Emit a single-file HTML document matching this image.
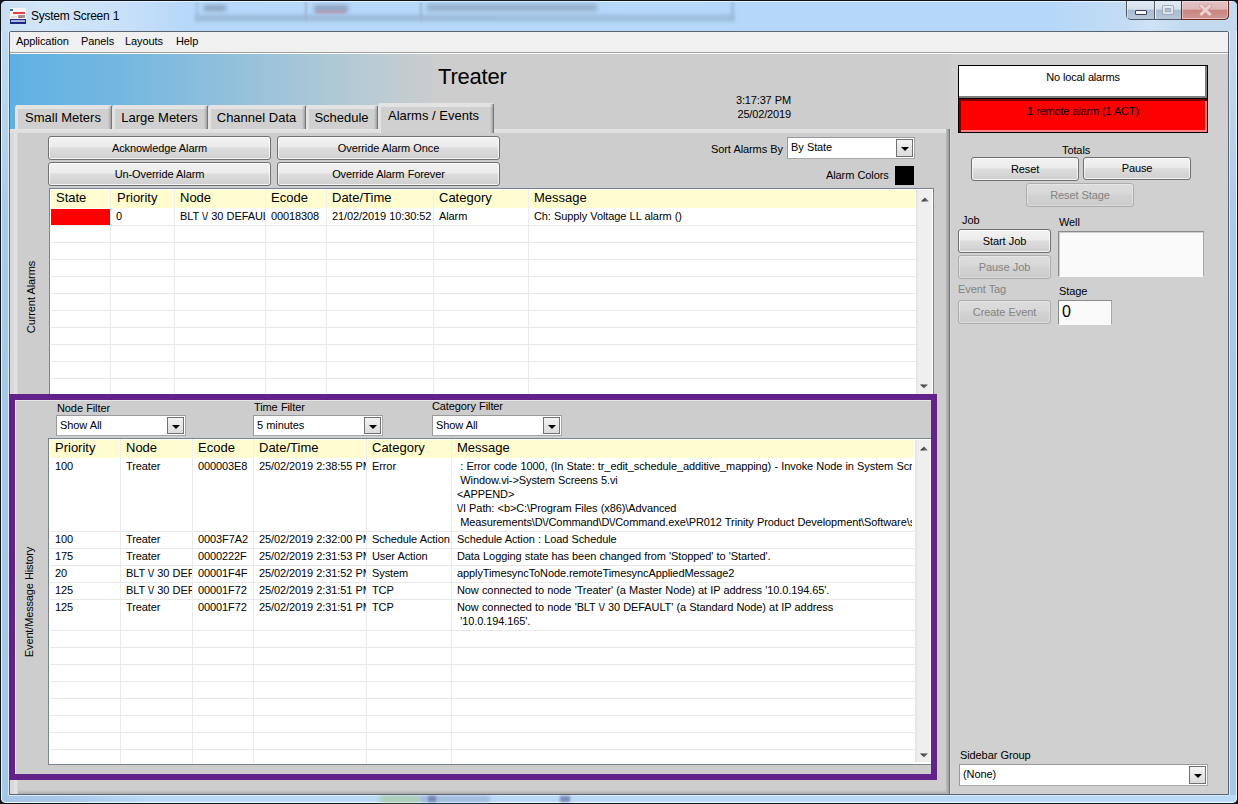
<!DOCTYPE html>
<html><head><meta charset="utf-8">
<style>
*{margin:0;padding:0;box-sizing:border-box}
html,body{width:1238px;height:804px;overflow:hidden;background:#10161e}
body{position:relative;font-family:"Liberation Sans",sans-serif;font-size:11px;color:#000;letter-spacing:-0.1px;word-spacing:0.3px}
.a{position:absolute}
.nw{white-space:nowrap}
.btn{position:absolute;border:1px solid #707070;border-radius:3px;background:linear-gradient(#f2f2f2 0%,#ebebeb 45%,#dddddd 50%,#cfcfcf 100%);box-shadow:inset 0 0 0 1px rgba(255,255,255,.75);text-align:center;font-size:11px;white-space:nowrap}
.btn.dis{border-color:#adadad;background:linear-gradient(#dcdcdc 0%,#d8d8d8 45%,#d2d2d2 50%,#cccccc 100%);color:#838383;box-shadow:inset 0 0 0 1px rgba(255,255,255,.3)}
.dd{position:absolute;background:#fff;border:1px solid #a8a8a8;border-top-color:#9a9a9a;border-left-color:#9a9a9a}
.dd .t{position:absolute;left:3px;top:3px;white-space:nowrap}
.dd .b{position:absolute;right:1px;top:1px;bottom:1px;width:17px;border:1px solid #707070;background:linear-gradient(#f3f3f3,#dcdcdc)}
.dd .b:after{content:"";position:absolute;left:4px;top:7px;border-left:4px solid transparent;border-right:4px solid transparent;border-top:4px solid #000}
.tab{position:absolute;top:105px;height:24px;background:#d0d0d0;border-left:3px solid #e3e3e3;border-top:4px solid #e3e3e3;border-radius:3px 2px 0 0;font-size:13px;letter-spacing:0;word-spacing:0;text-align:center;padding-top:1px;padding-right:4px;white-space:nowrap}
.tab:after{content:"";position:absolute;right:0;top:-3px;bottom:0;width:4px;background:linear-gradient(90deg,rgba(0,0,0,0),rgba(0,0,0,.12) 40%,rgba(0,0,0,.22) 70%,#777 75%)}
.hd{position:absolute;font-size:13px;white-space:nowrap;letter-spacing:0;word-spacing:0}
.cell{position:absolute;white-space:pre;overflow:hidden}
.vl{position:absolute;width:1px;background:#ebebeb}
.hl{position:absolute;height:1px;background:#e9e9e9}
</style></head><body>
<!-- window frame -->
<div class="a" style="left:0;top:0;width:1238px;height:804px;border-radius:6px 6px 6px 6px;background:linear-gradient(#c8ddf2 0px,#bcd6ee 80px,#abcae8 220px,#a7c7e6 400px);border:1px solid #0d131b;box-shadow:inset 1px 1px 0 #eef5ff,inset -1px 0 0 #eef5ff"></div>
<div class="a" style="left:1px;top:1px;width:1236px;height:30px;border-radius:5px 5px 0 0;background:linear-gradient(90deg,#c9def2 0%,#d3e6f8 3%,#c8e0f8 10%,#b6d8fa 15%,#b5d8fa 85%,#c4dcf2 91%,#cfe3f6 93%,#c2d9ef 96%,#c4d9ee 100%)"></div>
<div class="a" style="left:6px;top:1px;width:1226px;height:1px;background:#e6f2ff"></div>
<!-- titlebar blurred background -->
<div class="a" style="left:196px;top:15px;width:538px;height:6px;background:#9bb9d9;filter:blur(2px)"></div>
<div class="a" style="left:196px;top:2px;width:2px;height:19px;background:#9bb9d9;filter:blur(1.5px)"></div>
<div class="a" style="left:731px;top:2px;width:3px;height:19px;background:#9bb9d9;filter:blur(1.5px)"></div>
<div class="a" style="left:305px;top:2px;width:2px;height:19px;background:#9db6d2;filter:blur(1.2px)"></div>
<div class="a" style="left:420px;top:2px;width:2px;height:19px;background:#9db6d2;filter:blur(1.2px)"></div>
<div class="a" style="left:204px;top:5px;width:22px;height:6px;background:#8aa3bd;filter:blur(2px)"></div>
<div class="a" style="left:314px;top:5px;width:34px;height:7px;background:#8ea2bc;filter:blur(2px)"></div>
<div class="a" style="left:316px;top:11px;width:30px;height:2px;background:#c090a8;filter:blur(1.2px)"></div>
<div class="a" style="left:427px;top:4px;width:170px;height:7px;background:#8ea6c0;filter:blur(2.5px);opacity:.85"></div>
<div class="a" style="left:1px;top:795px;width:1236px;height:8px;border-radius:0 0 5px 5px;background:linear-gradient(90deg,#a6c6e6 0%,#a8c9e9 5%,#b9dbf8 12%,#b9dbf8 100%);border-bottom:1px solid #eef8ff;border-left:1px solid #eef8ff;border-right:1px solid #eef8ff"></div>
<div class="a" style="left:9px;top:795px;width:1220px;height:1px;background:#dbe9fa"></div>
<div class="a" style="left:380px;top:796px;width:40px;height:6px;background:#a9c9a0;filter:blur(2px);opacity:.9"></div>
<div class="a" style="left:420px;top:796px;width:70px;height:6px;background:#98aed0;filter:blur(2px);opacity:.8"></div>
<div class="a" style="left:428px;top:796px;width:8px;height:6px;background:#6a72a8;filter:blur(1.5px);opacity:.8"></div>
<div class="a" style="left:560px;top:796px;width:10px;height:6px;background:#6a72a8;filter:blur(1.5px);opacity:.8"></div>
<div class="a" style="left:8px;top:31px;width:1px;height:764px;background:#d8ecf8"></div>
<div class="a" style="left:1229px;top:31px;width:1px;height:764px;background:#dbe9fa"></div>
<!-- icon -->
<div class="a" style="left:10px;top:8px;width:16px;height:16px;background:#f6f6f6"></div>
<div class="a" style="left:10px;top:9px;width:3px;height:2px;background:#3c6fb8"></div>
<div class="a" style="left:13px;top:12px;width:12px;height:2px;background:#e24040"></div>
<div class="a" style="left:11px;top:16px;width:6px;height:2px;background:#dcdcdc"></div>
<div class="a" style="left:18px;top:15px;width:7px;height:3px;background:#8a7a7a;opacity:.8"></div>
<div class="a" style="left:19px;top:17px;width:3px;height:1px;background:#d05050"></div>
<div class="a" style="left:10px;top:19px;width:16px;height:5px;background:#1d2a8a"></div>
<div class="a" style="left:11px;top:20px;width:14px;height:2px;background:#c8cce8;opacity:.85"></div>
<div class="a nw" style="left:31px;top:9px;font-size:12px;letter-spacing:-0.25px">System Screen 1</div>
<!-- window buttons -->
<div class="a" style="left:1126px;top:1px;width:103px;height:19px;border:1px solid #4c5664;border-top:none;border-radius:0 0 5px 5px;background:linear-gradient(#e3ebf4 0%,#d6e1ec 45%,#a9bcd2 52%,#b8c8da 100%)"></div>
<div class="a" style="left:1181px;top:1px;width:48px;height:19px;border:1px solid #6d2a20;border-top:none;border-radius:0 0 5px 0;background:linear-gradient(#e2c3c5 0%,#dcb6b8 45%,#c9847f 52%,#cf9996 100%);box-shadow:inset 0 0 0 1px rgba(255,240,240,.45)"></div>
<div class="a" style="left:1154px;top:1px;width:1px;height:18px;background:#4f5864"></div>
<div class="a" style="left:1155px;top:1px;width:1px;height:18px;background:#eef3f8"></div>
<div class="a" style="left:1127px;top:1px;width:1px;height:18px;background:#eef3f8;opacity:.6"></div>
<div class="a" style="left:1135px;top:10px;width:12px;height:5px;background:#f6f6f6;border:1px solid #3a4150;border-radius:1px"></div>
<div class="a" style="left:1162px;top:5px;width:12px;height:10px;border:1px solid #9aa8b8;background:#e4eaf0;opacity:.85;border-radius:1px"></div>
<div class="a" style="left:1165px;top:8px;width:6px;height:4px;border:1px solid #9aa8b8;background:#aebdd0;opacity:.9"></div>
<svg class="a" style="left:1199px;top:4px" width="13" height="12"><path d="M2.5 2 L10.5 10 M10.5 2 L2.5 10" stroke="#bf8f8f" stroke-width="5" stroke-linecap="square" fill="none" opacity=".6"/><path d="M2.5 2 L10.5 10 M10.5 2 L2.5 10" stroke="#eed0d0" stroke-width="3" stroke-linecap="square" fill="none"/></svg>

<!-- client -->
<div class="a" style="left:9px;top:31px;width:1220px;height:764px;background:#cdcdcd;border:1px solid #5a6470;border-radius:2px 2px 0 0"></div>
<div class="a" style="left:10px;top:32px;width:1218px;height:20px;background:#f0f0f0"></div>
<div class="a" style="left:10px;top:52px;width:1218px;height:1px;background:#a0a0a0"></div>
<div class="a" style="left:10px;top:53px;width:1218px;height:1px;background:#fafafa"></div>
<div class="a nw" style="left:16px;top:35px">Application</div>
<div class="a nw" style="left:81px;top:35px">Panels</div>
<div class="a nw" style="left:125px;top:35px">Layouts</div>
<div class="a nw" style="left:176px;top:35px">Help</div>

<!-- sidebar bg -->
<div class="a" style="left:950px;top:54px;width:278px;height:740px;background:#d0d0d0"></div>
<!-- header gradient -->
<div class="a" style="left:10px;top:54px;width:940px;height:75px;background:linear-gradient(90deg,#5fb1e3 0%,#74b8e0 12%,#98c2da 26%,#b8cbd4 38%,#cdcdcd 46%,#cdcdcd 100%)"></div>
<div class="a nw" style="left:438px;top:64px;font-size:22px;letter-spacing:-0.2px">Treater</div>
<div class="a nw" style="left:720px;top:93px;text-align:right;width:71px;line-height:14px;letter-spacing:-0.15px">3:17:37 PM<br>25/02/2019</div>

<!-- tabs -->
<div class="tab" style="left:15px;width:97px">Small Meters</div>
<div class="tab" style="left:112px;width:96px">Large Meters</div>
<div class="tab" style="left:208px;width:98px">Channel Data</div>
<div class="tab" style="left:306px;width:72px">Schedule</div>

<!-- tab panel -->
<div class="a" style="left:10px;top:129px;width:940px;height:4px;background:linear-gradient(#e4e4e4,#dedede)"></div>
<div class="a" style="left:10px;top:133px;width:8px;height:661px;background:linear-gradient(90deg,#d8d8d8 0%,#d9d9d9 50%,#e2e2e2 50%,#e2e2e2 87.5%,#d5d5d5 87.5%)"></div>
<div class="a" style="left:18px;top:790px;width:928px;height:4px;background:linear-gradient(#cdcdcd,#bdbdbd 50%,#a9a9a9)"></div>
<div class="a" style="left:946px;top:129px;width:4px;height:665px;background:linear-gradient(90deg,#c0c0c0,#adadad 33%,#a0a0a0 66%,#757575 75%)"></div>
<div class="a" style="left:950px;top:129px;width:1px;height:665px;background:#d9d9d9"></div>
<div class="tab" style="left:378px;top:103px;width:116px;height:30px;background:#d0d0d0;padding-top:1px;padding-right:8px">Alarms / Events</div>
<!-- upper section -->
<div class="a nw" style="left:31px;top:298px;width:0;height:0"><div class="a" style="left:-45px;top:-7px;width:90px;text-align:center;transform:rotate(-90deg)">Current Alarms</div></div>
<div class="btn" style="left:48px;top:136px;width:223px;height:24px;padding-top:5px">Acknowledge Alarm</div>
<div class="btn" style="left:277px;top:136px;width:223px;height:24px;padding-top:5px">Override Alarm Once</div>
<div class="btn" style="left:48px;top:162px;width:223px;height:24px;padding-top:5px">Un-Override Alarm</div>
<div class="btn" style="left:277px;top:162px;width:223px;height:24px;padding-top:5px">Override Alarm Forever</div>
<div class="a nw" style="left:711px;top:143px">Sort Alarms By</div>
<div class="dd" style="left:787px;top:137px;width:128px;height:22px"><span class="t">By State</span><div class="b"></div></div>
<div class="a nw" style="left:826px;top:169px">Alarm Colors</div>
<div class="a" style="left:895px;top:166px;width:19px;height:19px;background:#000"></div>
<div class="a" style="left:49px;top:188px;width:885px;height:210px;background:#fff;border:1px solid #7b8492;border-bottom:none"></div>
<div class="a" style="left:51px;top:190px;width:864px;height:18px;background:#fffccf"></div>
<div class="a" style="left:916px;top:190px;width:16px;height:204px;background:linear-gradient(90deg,#e4e4e4,#efefef 20%,#efefef 85%,#f4f4f4)"></div>
<div class="vl" style="left:110px;top:189px;height:205px"></div>
<div class="a" style="left:110px;top:190px;width:1px;height:18px;background:#f0f0f0"></div>
<div class="vl" style="left:174px;top:189px;height:205px"></div>
<div class="a" style="left:174px;top:190px;width:1px;height:18px;background:#f0f0f0"></div>
<div class="vl" style="left:265px;top:189px;height:205px"></div>
<div class="a" style="left:265px;top:190px;width:1px;height:18px;background:#f0f0f0"></div>
<div class="vl" style="left:326px;top:189px;height:205px"></div>
<div class="a" style="left:326px;top:190px;width:1px;height:18px;background:#f0f0f0"></div>
<div class="vl" style="left:433px;top:189px;height:205px"></div>
<div class="a" style="left:433px;top:190px;width:1px;height:18px;background:#f0f0f0"></div>
<div class="vl" style="left:528px;top:189px;height:205px"></div>
<div class="a" style="left:528px;top:190px;width:1px;height:18px;background:#f0f0f0"></div>
<div class="hl" style="left:51px;top:225px;width:865px"></div>
<div class="hl" style="left:51px;top:242px;width:865px"></div>
<div class="hl" style="left:51px;top:259px;width:865px"></div>
<div class="hl" style="left:51px;top:276px;width:865px"></div>
<div class="hl" style="left:51px;top:293px;width:865px"></div>
<div class="hl" style="left:51px;top:310px;width:865px"></div>
<div class="hl" style="left:51px;top:327px;width:865px"></div>
<div class="hl" style="left:51px;top:344px;width:865px"></div>
<div class="hl" style="left:51px;top:361px;width:865px"></div>
<div class="hl" style="left:51px;top:378px;width:865px"></div>
<div class="hd" style="left:56px;top:190px">State</div>
<div class="hd" style="left:117px;top:190px">Priority</div>
<div class="hd" style="left:180px;top:190px">Node</div>
<div class="hd" style="left:271px;top:190px">Ecode</div>
<div class="hd" style="left:332px;top:190px">Date/Time</div>
<div class="hd" style="left:439px;top:190px">Category</div>
<div class="hd" style="left:534px;top:190px">Message</div>
<div class="a" style="left:51px;top:209px;width:59px;height:16px;background:#f00"></div>
<div class="cell" style="left:116px;top:210px;width:55px">0</div>
<div class="cell" style="left:180px;top:210px;width:85px">BLT \/ 30 DEFAULT</div>
<div class="cell" style="left:271px;top:210px;width:55px">00018308</div>
<div class="cell" style="left:332px;top:210px;width:100px">21/02/2019 10:30:52</div>
<div class="cell" style="left:439px;top:210px;width:85px">Alarm</div>
<div class="cell" style="left:534px;top:210px;width:380px">Ch: Supply Voltage LL alarm ()</div>
<svg class="a" style="left:921px;top:197px" width="8" height="5"><defs><linearGradient id="gu" x1="0" x2="1"><stop offset="0" stop-color="#1e1e1e"/><stop offset="1" stop-color="#8a8a8a"/></linearGradient></defs><polygon points="0,4.5 4,0.5 8,4.5" fill="url(#gu)"/></svg>
<svg class="a" style="left:920px;top:384px" width="8" height="5"><defs><linearGradient id="gd" x1="0" x2="1" y1="0" y2="1"><stop offset="0" stop-color="#1e1e1e"/><stop offset="1" stop-color="#9a9a9a"/></linearGradient></defs><polygon points="0,0.5 8,0.5 4,4.5" fill="url(#gd)"/></svg>
<!-- lower section -->
<div class="a" style="left:9px;top:394px;width:928px;height:386px;border:6px solid #63218a;background:#cdcdcd"></div>
<div class="a" style="left:15px;top:400px;width:916px;height:1px;background:#e6e6e6"></div>
<div class="a" style="left:15px;top:400px;width:1px;height:374px;background:#e8ece4"></div>
<div class="a nw" style="left:29px;top:603px;width:0;height:0"><div class="a" style="left:-65px;top:-7px;width:130px;text-align:center;transform:rotate(-90deg);letter-spacing:-0.15px">Event/Message History</div></div>
<div class="a nw" style="left:57px;top:402px">Node Filter</div>
<div class="a nw" style="left:254px;top:401px">Time Filter</div>
<div class="a nw" style="left:432px;top:400px">Category Filter</div>
<div class="dd" style="left:56px;top:415px;width:130px;height:21px"><span class="t">Show All</span><div class="b"></div></div>
<div class="dd" style="left:253px;top:415px;width:130px;height:21px"><span class="t">5 minutes</span><div class="b"></div></div>
<div class="dd" style="left:432px;top:415px;width:130px;height:21px"><span class="t">Show All</span><div class="b"></div></div>
<div class="a" style="left:48px;top:438px;width:883px;height:327px;background:#fff;border:1px solid #7b8492;border-right:none"></div>
<div class="a" style="left:50px;top:440px;width:863px;height:18px;background:#fffccf"></div>
<div class="a" style="left:915px;top:440px;width:16px;height:322px;background:linear-gradient(90deg,#e4e4e4,#efefef 20%,#efefef 85%,#f4f4f4)"></div>
<div class="vl" style="left:120px;top:439px;height:325px"></div>
<div class="a" style="left:120px;top:440px;width:1px;height:18px;background:#f0f0f0"></div>
<div class="vl" style="left:192px;top:439px;height:325px"></div>
<div class="a" style="left:192px;top:440px;width:1px;height:18px;background:#f0f0f0"></div>
<div class="vl" style="left:253px;top:439px;height:325px"></div>
<div class="a" style="left:253px;top:440px;width:1px;height:18px;background:#f0f0f0"></div>
<div class="vl" style="left:366px;top:439px;height:325px"></div>
<div class="a" style="left:366px;top:440px;width:1px;height:18px;background:#f0f0f0"></div>
<div class="vl" style="left:451px;top:439px;height:325px"></div>
<div class="a" style="left:451px;top:440px;width:1px;height:18px;background:#f0f0f0"></div>
<div class="hl" style="left:50px;top:531px;width:865px"></div>
<div class="hl" style="left:50px;top:548px;width:865px"></div>
<div class="hl" style="left:50px;top:565px;width:865px"></div>
<div class="hl" style="left:50px;top:582px;width:865px"></div>
<div class="hl" style="left:50px;top:599px;width:865px"></div>
<div class="hl" style="left:50px;top:630px;width:865px"></div>
<div class="hl" style="left:50px;top:647px;width:865px"></div>
<div class="hl" style="left:50px;top:664px;width:865px"></div>
<div class="hl" style="left:50px;top:681px;width:865px"></div>
<div class="hl" style="left:50px;top:698px;width:865px"></div>
<div class="hl" style="left:50px;top:715px;width:865px"></div>
<div class="hl" style="left:50px;top:732px;width:865px"></div>
<div class="hl" style="left:50px;top:749px;width:865px"></div>
<div class="hd" style="left:55px;top:440px">Priority</div>
<div class="hd" style="left:126px;top:440px">Node</div>
<div class="hd" style="left:198px;top:440px">Ecode</div>
<div class="hd" style="left:259px;top:440px">Date/Time</div>
<div class="hd" style="left:372px;top:440px">Category</div>
<div class="hd" style="left:457px;top:440px">Message</div>
<div class="cell" style="left:55px;top:460px;width:65px">100</div>
<div class="cell" style="left:126px;top:460px;width:66px">Treater</div>
<div class="cell" style="left:198px;top:460px;width:55px">000003E8</div>
<div class="cell" style="left:259px;top:460px;width:107px">25/02/2019 2:38:55 PM</div>
<div class="cell" style="left:372px;top:460px;width:79px">Error</div>
<div class="cell" style="left:457px;top:459px;width:455px;line-height:14px"> : Error code 1000, (In State: tr_edit_schedule_additive_mapping) - Invoke Node in System Screens
 Window.vi-&gt;System Screens 5.vi
&lt;APPEND&gt;
\/I Path: &lt;b&gt;C:\Program Files (x86)\Advanced
 Measurements\D\/Command\D\/Command.exe\PR012 Trinity Product Development\Software\src</div>
<div class="cell" style="left:55px;top:533px;width:65px">100</div>
<div class="cell" style="left:126px;top:533px;width:66px">Treater</div>
<div class="cell" style="left:198px;top:533px;width:55px">0003F7A2</div>
<div class="cell" style="left:259px;top:533px;width:107px">25/02/2019 2:32:00 PM</div>
<div class="cell" style="left:372px;top:533px;width:79px">Schedule Action</div>
<div class="cell" style="left:457px;top:532px;width:455px;line-height:14px">Schedule Action : Load Schedule</div>
<div class="cell" style="left:55px;top:550px;width:65px">175</div>
<div class="cell" style="left:126px;top:550px;width:66px">Treater</div>
<div class="cell" style="left:198px;top:550px;width:55px">0000222F</div>
<div class="cell" style="left:259px;top:550px;width:107px">25/02/2019 2:31:53 PM</div>
<div class="cell" style="left:372px;top:550px;width:79px">User Action</div>
<div class="cell" style="left:457px;top:549px;width:455px;line-height:14px">Data Logging state has been changed from 'Stopped' to 'Started'.</div>
<div class="cell" style="left:55px;top:567px;width:65px">20</div>
<div class="cell" style="left:126px;top:567px;width:66px">BLT \/ 30 DEFAULT</div>
<div class="cell" style="left:198px;top:567px;width:55px">00001F4F</div>
<div class="cell" style="left:259px;top:567px;width:107px">25/02/2019 2:31:52 PM</div>
<div class="cell" style="left:372px;top:567px;width:79px">System</div>
<div class="cell" style="left:457px;top:566px;width:455px;line-height:14px">applyTimesyncToNode.remoteTimesyncAppliedMessage2</div>
<div class="cell" style="left:55px;top:584px;width:65px">125</div>
<div class="cell" style="left:126px;top:584px;width:66px">BLT \/ 30 DEFAULT</div>
<div class="cell" style="left:198px;top:584px;width:55px">00001F72</div>
<div class="cell" style="left:259px;top:584px;width:107px">25/02/2019 2:31:51 PM</div>
<div class="cell" style="left:372px;top:584px;width:79px">TCP</div>
<div class="cell" style="left:457px;top:583px;width:455px;line-height:14px">Now connected to node 'Treater' (a Master Node) at IP address '10.0.194.65'.</div>
<div class="cell" style="left:55px;top:601px;width:65px">125</div>
<div class="cell" style="left:126px;top:601px;width:66px">Treater</div>
<div class="cell" style="left:198px;top:601px;width:55px">00001F72</div>
<div class="cell" style="left:259px;top:601px;width:107px">25/02/2019 2:31:51 PM</div>
<div class="cell" style="left:372px;top:601px;width:79px">TCP</div>
<div class="cell" style="left:457px;top:600px;width:455px;line-height:14px">Now connected to node 'BLT \/ 30 DEFAULT' (a Standard Node) at IP address
 '10.0.194.165'.</div>
<svg class="a" style="left:920px;top:446px" width="8" height="5"><defs><linearGradient id="gu" x1="0" x2="1"><stop offset="0" stop-color="#1e1e1e"/><stop offset="1" stop-color="#8a8a8a"/></linearGradient></defs><polygon points="0,4.5 4,0.5 8,4.5" fill="url(#gu)"/></svg>
<svg class="a" style="left:920px;top:753px" width="8" height="5"><defs><linearGradient id="gd" x1="0" x2="1" y1="0" y2="1"><stop offset="0" stop-color="#1e1e1e"/><stop offset="1" stop-color="#9a9a9a"/></linearGradient></defs><polygon points="0,0.5 8,0.5 4,4.5" fill="url(#gd)"/></svg>
<!-- sidebar -->
<div class="a" style="left:958px;top:65px;width:250px;height:34px;background:#fff;border:1px solid #000;box-shadow:inset -2px -2px 0 #808080"></div>
<div class="a nw" style="left:958px;top:71px;width:250px;text-align:center;letter-spacing:-0.2px">No local alarms</div>
<div class="a" style="left:958px;top:98px;width:250px;height:35px;background:#f00;border:1px solid #000;box-shadow:inset 2px 2px 0 #800000,inset -2px -2px 0 #ff8080"></div>
<div class="a nw" style="left:958px;top:105px;width:250px;text-align:center;letter-spacing:-0.2px">1 remote alarm (1 ACT)</div>
<div class="a nw" style="left:1062px;top:144px">Totals</div>
<div class="btn" style="left:971px;top:157px;width:108px;height:24px;padding-top:5px">Reset</div>
<div class="btn" style="left:1083px;top:157px;width:108px;height:23px;padding-top:4px">Pause</div>
<div class="btn dis" style="left:1026px;top:183px;width:108px;height:24px;padding-top:5px">Reset Stage</div>
<div class="a nw" style="left:962px;top:214px">Job</div>
<div class="a nw" style="left:1059px;top:216px">Well</div>
<div class="btn" style="left:958px;top:229px;width:93px;height:24px;padding-top:5px">Start Job</div>
<div class="btn dis" style="left:958px;top:255px;width:93px;height:24px;padding-top:5px">Pause Job</div>
<div class="a nw" style="left:958px;top:283px;color:#838383">Event Tag</div>
<div class="btn dis" style="left:958px;top:300px;width:93px;height:24px;padding-top:5px">Create Event</div>
<div class="a" style="left:1058px;top:231px;width:146px;height:46px;background:#fafafa;border:1px solid #8a8a8a;border-bottom-color:#fafafa;border-right-color:#a8a8a8;box-shadow:inset 1px 1px 0 #cfcfcf"></div>
<div class="a nw" style="left:1059px;top:285px">Stage</div>
<div class="a nw" style="left:1058px;top:300px;width:54px;height:25px;background:#fafafa;border:1px solid #8a8a8a;border-bottom-color:#fafafa;border-right-color:#a8a8a8;font-size:16px;padding:2px 0 0 3px">0</div>
<div class="a nw" style="left:960px;top:749px">Sidebar Group</div>
<div class="dd" style="left:959px;top:764px;width:249px;height:22px"><span class="t">(None)</span><div class="b"></div></div>
</body></html>
